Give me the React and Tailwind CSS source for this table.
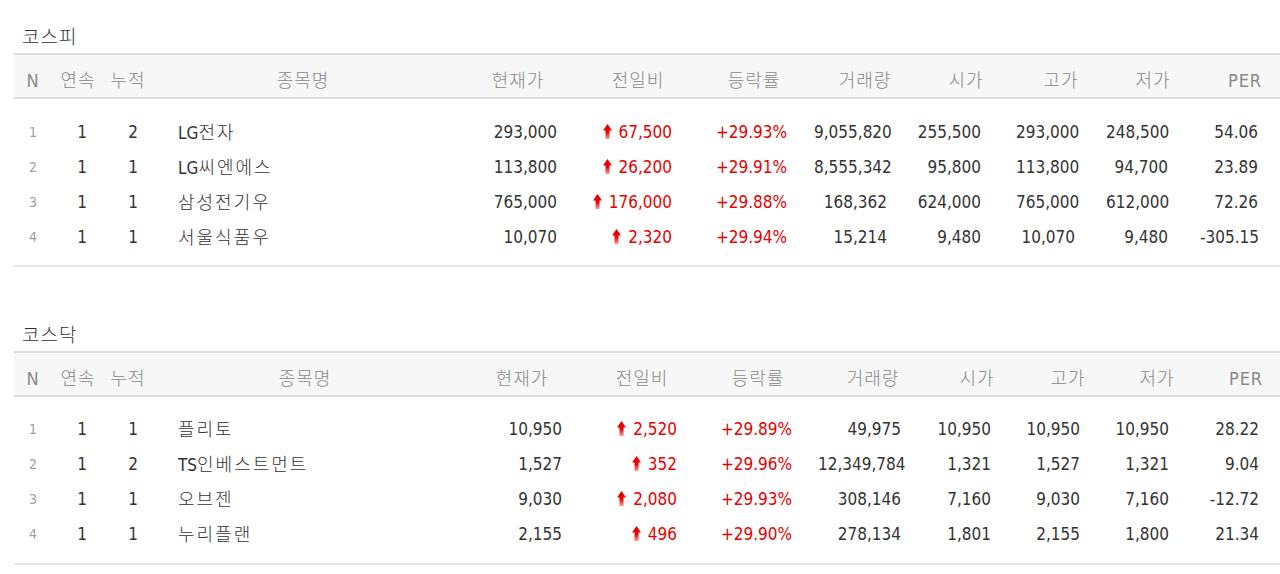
import React from "react";

const FONT = "font-['DejaVu_Sans_Condensed','Liberation_Sans','Noto_Sans_CJK_KR',sans-serif]";

const HEADERS = ["N", "연속", "누적", "종목명", "현재가", "전일비", "등락률", "거래량", "시가", "고가", "저가", "PER"];

const markets = [
   {
      title: "코스피",
      grid: "grid-cols-[38px_52px_48px_302px_128px_112px_120px_102px_100px_90px_94px_90px]",
      pad: ["", "pl-2", "pl-[10px]", "pl-[26px]", "pr-[25px]", "pr-[22px]", "pr-[27px]", "pr-[29px]", "pr-[35px]", "pr-[31px]", "pr-[32px]", "pr-[32px]"],
      rows: [
         ["1", "1", "2", "LG전자", "293,000", "67,500", "+29.93%", "9,055,820", "255,500", "293,000", "248,500", "54.06"],
         ["2", "1", "1", "LG씨엔에스", "113,800", "26,200", "+29.91%", "8,555,342", "95,800", "113,800", "94,700", "23.89"],
         ["3", "1", "1", "삼성전기우", "765,000", "176,000", "+29.88%", "168,362", "624,000", "765,000", "612,000", "72.26"],
         ["4", "1", "1", "서울식품우", "10,070", "2,320", "+29.94%", "15,214", "9,480", "10,070", "9,480", "-305.15"],
      ],
   },
   {
      title: "코스닥",
      grid: "grid-cols-[38px_52px_48px_306px_128px_112px_120px_110px_98px_84px_94px_84px]",
      pad: ["", "pl-2", "pl-[10px]", "pl-[26px]", "pr-[24px]", "pr-[21px]", "pr-[26px]", "pr-[27px]", "pr-[35px]", "pr-[30px]", "pr-[35px]", "pr-[29px]"],
      rows: [
         ["1", "1", "1", "플리토", "10,950", "2,520", "+29.89%", "49,975", "10,950", "10,950", "10,950", "28.22"],
         ["2", "1", "2", "TS인베스트먼트", "1,527", "352", "+29.96%", "12,349,784", "1,321", "1,527", "1,321", "9.04"],
         ["3", "1", "1", "오브젠", "9,030", "2,080", "+29.93%", "308,146", "7,160", "9,030", "7,160", "-12.72"],
         ["4", "1", "1", "누리플랜", "2,155", "496", "+29.90%", "278,134", "1,801", "2,155", "1,800", "21.34"],
      ],
   },
];

function UpArrow() {
   return (
      <svg width="9" height="15" viewBox="0 0 9 15" className="shrink-0 -mt-[2px]">
         <defs>
            <linearGradient id="upg" x1="0" y1="0" x2="0" y2="1">
               <stop offset="0" stopColor="#e00000" />
               <stop offset="0.55" stopColor="#f00000" />
               <stop offset="1" stopColor="#ff9c9c" />
            </linearGradient>
         </defs>
         <polygon points="0,6.5 4.5,0 9,6.5 6.5,6.5 6.5,15 2.5,15 2.5,6.5" fill="url(#upg)" />
      </svg>
   );
}

// latin part of a stock name keeps normal spacing, hangul gets a bit of tracking
function StockName({ name }) {
   const parts = name.split(/([A-Za-z]+)/).filter(Boolean);
   return parts.map((p, i) =>
      /^[A-Za-z]+$/.test(p) ? (
         <span key={i} className="tracking-normal text-[17px] font-normal">
            {p}
         </span>
      ) : (
         <span key={i} className="tracking-[2px]">
            {p}
         </span>
      )
   );
}

function Cell({ i, value, pad }) {
   if (i === 0) {
      return <div className="text-center text-[14px] text-[#a0a0a0]">{value}</div>;
   }
   if (i === 1 || i === 2) {
      return <div className={`text-center ${pad}`}>{value}</div>;
   }
   if (i === 3) {
      return (
         <div className={`text-left text-[18px] font-light ${pad}`}>
            <StockName name={value} />
         </div>
      );
   }
   if (i === 5) {
      return (
         <div className={`flex items-center justify-end gap-[7px] text-[#e60000] ${pad}`}>
            <UpArrow />
            <span>{value}</span>
         </div>
      );
   }
   if (i === 6) {
      return <div className={`text-right text-[#e60000] ${pad}`}>{value}</div>;
   }
   return <div className={`text-right ${pad}`}>{value}</div>;
}

function MarketTable({ market, first }) {
   return (
      <section className={first ? "pt-[27px]" : "mt-[58px]"}>
         <h2 className="pl-2 h-5 leading-5 text-[19px] tracking-[1px] font-light text-[#333]">{market.title}</h2>
         <div className="mt-[6px] w-max">
            <div className={`grid ${market.grid} items-center h-[46px] pt-[9px] bg-[#f7f7f7] border-t-2 border-b-2 border-[#dddddd] text-[18px] font-light text-[#888]`}>
               {HEADERS.map((h) => (
                  <div key={h} className="text-center tracking-[1px]">
                     {h}
                  </div>
               ))}
            </div>
            <div className={`${first ? "pt-[16px] pb-[10px]" : "pt-[15px] pb-[11px]"} border-b-2 border-[#e6e6e6]`}>
               {market.rows.map((row) => (
                  <div key={row[3]} className={`grid ${market.grid} items-center h-[35px] text-[17px] text-[#333]`}>
                     {row.map((v, i) => (
                        <Cell key={i} i={i} value={v} pad={market.pad[i]} />
                     ))}
                  </div>
               ))}
            </div>
         </div>
      </section>
   );
}

export default function App() {
   return (
      <div className={`w-full h-[574px] overflow-hidden bg-white pl-[14px] ${FONT}`}>
         {markets.map((m, idx) => (
            <MarketTable key={m.title} market={m} first={idx === 0} />
         ))}
      </div>
   );
}
